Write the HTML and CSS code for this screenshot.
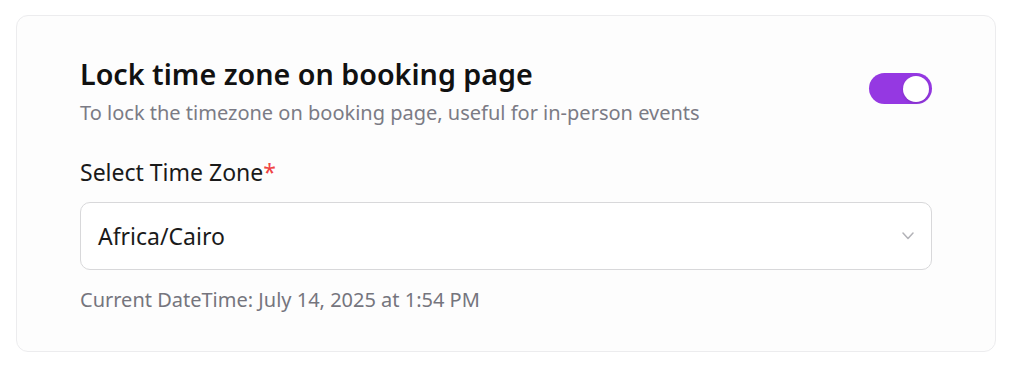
FILE: index.html
```html
<!DOCTYPE html>
<html lang="en">
<head>
    <meta charset="UTF-8">
    <meta name="viewport" content="width=device-width, initial-scale=1.0">
    <title>Lock time zone</title>
    <link rel="stylesheet" href="styles.css">
</head>
<body>
    <div class="card">
        <div class="row">
            <div class="text">
                <h2>Lock time zone on booking page</h2>
                <p class="desc">To lock the timezone on booking page, useful for in-person events</p>
            </div>
            <span class="toggle"><span class="knob"></span></span>
        </div>

        <label class="label">Select Time Zone<span class="req">*</span></label>
        <div class="select">
            <span>Africa/Cairo</span>
            <svg width="12" height="8" viewBox="0 0 12 8"><path d="M1 1l5 5.5 5-5.5" fill="none" stroke="#b3b3b8" stroke-width="1.5" stroke-linecap="round" stroke-linejoin="round"/></svg>
        </div>
        <p class="note">Current DateTime: July 14, 2025 at 1:54 PM</p>
    </div>
</body>
</html>
```

FILE: styles.css
```css
body { margin: 0; padding: 15px 28px 0 16px; font-family: "Noto Sans", "Open Sans", sans-serif; background: #fff; color: #111; }
.card { border: 1px solid #ececee; border-radius: 12px; background: #fdfdfd; padding: 39px 63px 37px 63px; }
.row { display: flex; justify-content: space-between; align-items: flex-start; }
h2 { margin: 0; font-size: 28.7px; font-weight: 600; line-height: 38px; color: #111; }
.desc { margin: 6px 0 0; font-size: 20px; color: #7b7b85; line-height: 28px; }
.toggle { width: 63px; height: 31px; border-radius: 16px; background: #9538e2; display: flex; align-items: center; justify-content: flex-end; padding: 0 3px; box-sizing: border-box; margin-top: 18px; }
.knob { width: 26px; height: 26px; border-radius: 50%; background: #fff; box-shadow: 0 1px 3px rgba(0,0,0,0.15); }
.label { display: block; margin-top: 30px; font-size: 23px; line-height: 30px; color: #1a1a1a; }
.req { color: #ef4444; }
.select { margin-top: 15px; height: 68px; box-sizing: border-box; border: 1px solid #d8d8da; border-radius: 10px; background: #fff; display: flex; align-items: center; justify-content: space-between; padding: 0 17px 0 17px; font-size: 23px; color: #1a1a1a; }
.note { margin: 16px 0 0; font-size: 20px; color: #75757d; line-height: 28px; }
```
